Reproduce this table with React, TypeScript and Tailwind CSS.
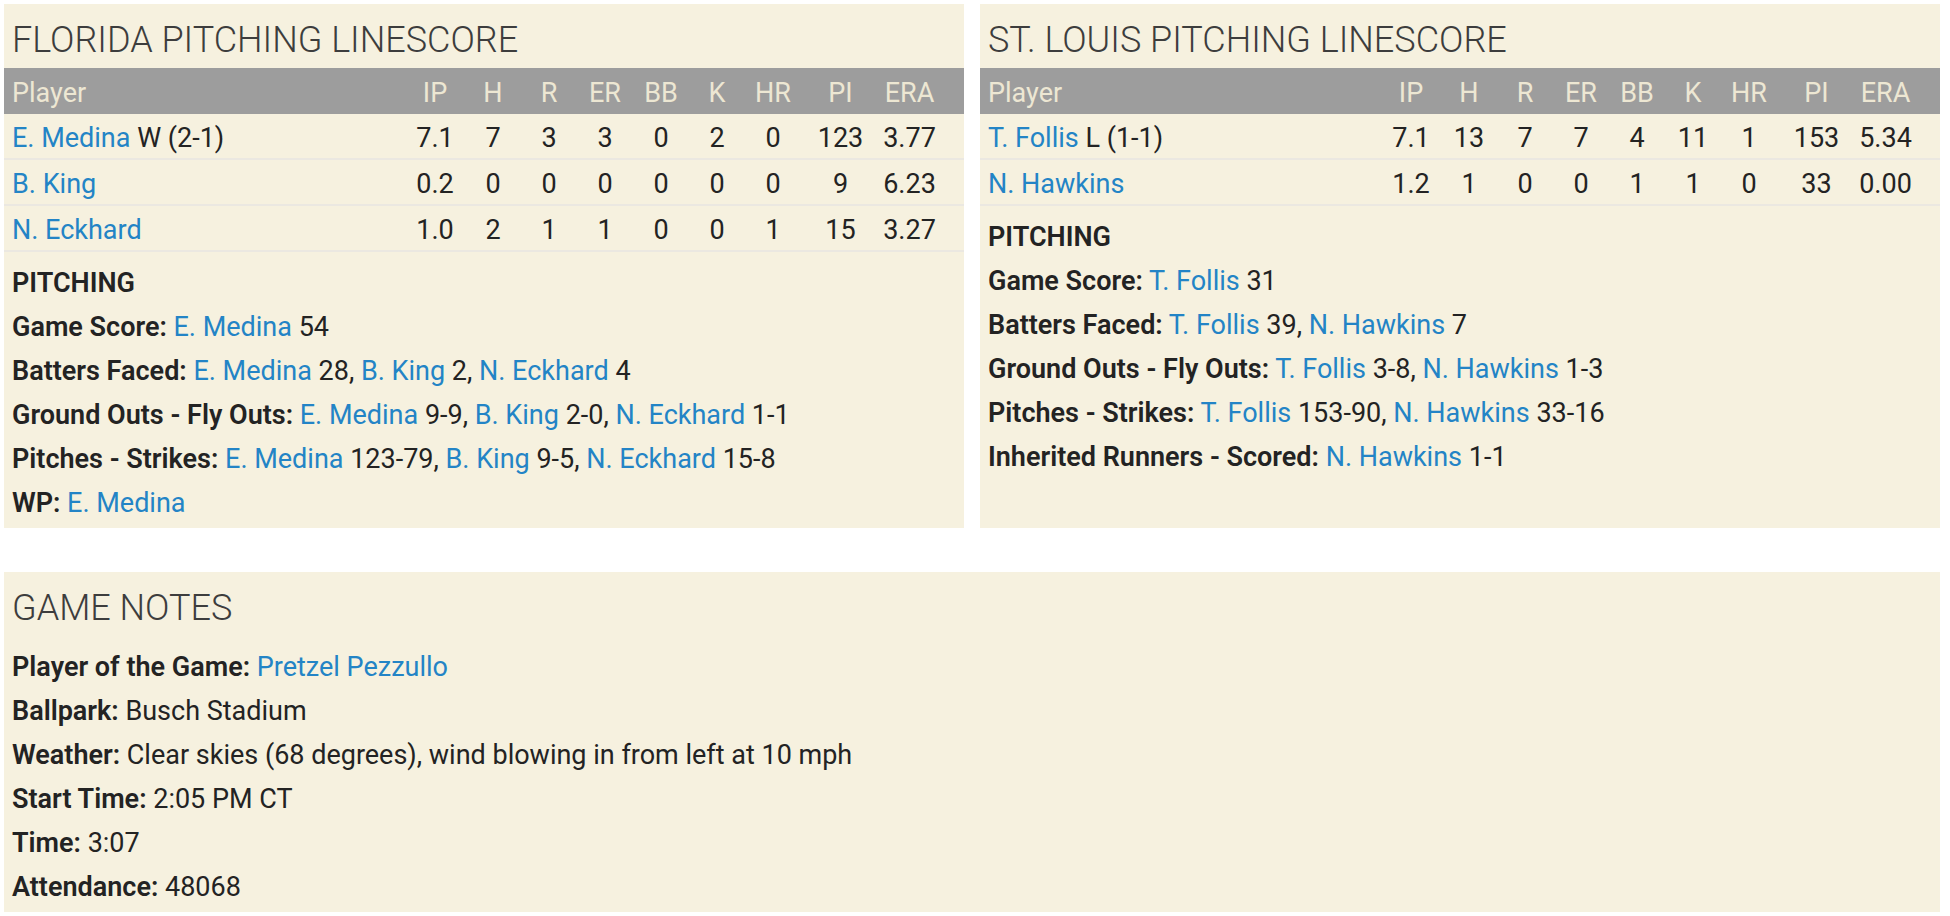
import React from 'react';

type Row = { name: string; note?: string; stats: string[] };

const cols = ['IP', 'H', 'R', 'ER', 'BB', 'K', 'HR', 'PI', 'ERA'];
const colW = ['w-[60px]', 'w-[56px]', 'w-[56px]', 'w-[56px]', 'w-[56px]', 'w-[56px]', 'w-[56px]', 'w-[74px] pl-[5px]', 'w-[69px]'];

const florida: Row[] = [
  { name: 'E. Medina', note: 'W (2-1)', stats: ['7.1', '7', '3', '3', '0', '2', '0', '123', '3.77'] },
  { name: 'B. King', stats: ['0.2', '0', '0', '0', '0', '0', '0', '9', '6.23'] },
  { name: 'N. Eckhard', stats: ['1.0', '2', '1', '1', '0', '0', '1', '15', '3.27'] },
];

const stlouis: Row[] = [
  { name: 'T. Follis', note: 'L (1-1)', stats: ['7.1', '13', '7', '7', '4', '11', '1', '153', '5.34'] },
  { name: 'N. Hawkins', stats: ['1.2', '1', '0', '0', '1', '1', '0', '33', '0.00'] },
];

// a line of notes: label, then pairs of [link, value]
type Part = [string, string];

const A = ({ children }: { children: React.ReactNode }) => (
  <span className="text-[#2384c6]">{children}</span>
);

const NoteLine = ({ label, parts }: { label: string; parts: Part[] }) => (
  <div className="leading-[44px] whitespace-nowrap">
    <span className="font-semibold">{label}:</span>{' '}
    {parts.map(([link, val], i) => (
      <React.Fragment key={i}>
        {link && <A>{link}</A>}
        {val && (link ? ' ' + val : val)}
        {i < parts.length - 1 && ', '}
      </React.Fragment>
    ))}
  </div>
);

const Title = ({ children }: { children: React.ReactNode }) => (
  <h2 className="pt-[9px] px-[8px] text-[36px] leading-[55px] font-light text-[#3d3d3d] uppercase">{children}</h2>
);

const Linescore = ({ title, rows, notes }: { title: string; rows: Row[]; notes: { label: string; parts: Part[] }[] }) => (
  <div className="bg-[#f6f1df]">
    <Title>{title}</Title>
    <div className="flex h-[46px] items-center bg-[#9d9d9d] text-[#ede7d3] pl-[8px] pr-[20px] pt-[4px]">
      <div className="flex-1">Player</div>
      {cols.map((c, i) => (
        <div key={c} className={`${colW[i]} text-center`}>{c}</div>
      ))}
    </div>
    {rows.map((r) => (
      <div key={r.name} className="flex h-[46px] items-center border-b-2 border-[#ebe8e1] pl-[8px] pr-[20px] pt-[5px]">
        <div className="flex-1">
          <A>{r.name}</A>
          {r.note && ' ' + r.note}
        </div>
        {r.stats.map((s, i) => (
          <div key={i} className={`${colW[i]} text-center`}>{s}</div>
        ))}
      </div>
    ))}
    <div className="px-[8px] pt-[9px] pb-[3px]">
      <div className="leading-[44px] font-semibold">PITCHING</div>
      {notes.map((n) => (
        <NoteLine key={n.label} label={n.label} parts={n.parts} />
      ))}
    </div>
  </div>
);

export default function App() {
  return (
    <div className="min-h-screen bg-white pt-[4px] pl-[4px] pb-[4px] text-[27px] text-[#232323]" style={{ fontFamily: 'Roboto, "Liberation Sans", sans-serif' }}>
      <div className="w-[1936px]">
        <div className="grid grid-cols-2 gap-[16px]">
          <Linescore
            title="Florida Pitching Linescore"
            rows={florida}
            notes={[
              { label: 'Game Score', parts: [['E. Medina', '54']] },
              { label: 'Batters Faced', parts: [['E. Medina', '28'], ['B. King', '2'], ['N. Eckhard', '4']] },
              { label: 'Ground Outs - Fly Outs', parts: [['E. Medina', '9-9'], ['B. King', '2-0'], ['N. Eckhard', '1-1']] },
              { label: 'Pitches - Strikes', parts: [['E. Medina', '123-79'], ['B. King', '9-5'], ['N. Eckhard', '15-8']] },
              { label: 'WP', parts: [['E. Medina', '']] },
            ]}
          />
          <Linescore
            title="St. Louis Pitching Linescore"
            rows={stlouis}
            notes={[
              { label: 'Game Score', parts: [['T. Follis', '31']] },
              { label: 'Batters Faced', parts: [['T. Follis', '39'], ['N. Hawkins', '7']] },
              { label: 'Ground Outs - Fly Outs', parts: [['T. Follis', '3-8'], ['N. Hawkins', '1-3']] },
              { label: 'Pitches - Strikes', parts: [['T. Follis', '153-90'], ['N. Hawkins', '33-16']] },
              { label: 'Inherited Runners - Scored', parts: [['N. Hawkins', '1-1']] },
            ]}
          />
        </div>

        <div className="mt-[44px] bg-[#f6f1df]">
          <Title>Game Notes</Title>
          <div className="px-[8px] pt-[9px] pb-[3px]">
            <NoteLine label="Player of the Game" parts={[['Pretzel Pezzullo', '']]} />
            <NoteLine label="Ballpark" parts={[['', 'Busch Stadium']]} />
            <NoteLine label="Weather" parts={[['', 'Clear skies (68 degrees), wind blowing in from left at 10 mph']]} />
            <NoteLine label="Start Time" parts={[['', '2:05 PM CT']]} />
            <NoteLine label="Time" parts={[['', '3:07']]} />
            <NoteLine label="Attendance" parts={[['', '48068']]} />
          </div>
        </div>
      </div>
    </div>
  );
}
